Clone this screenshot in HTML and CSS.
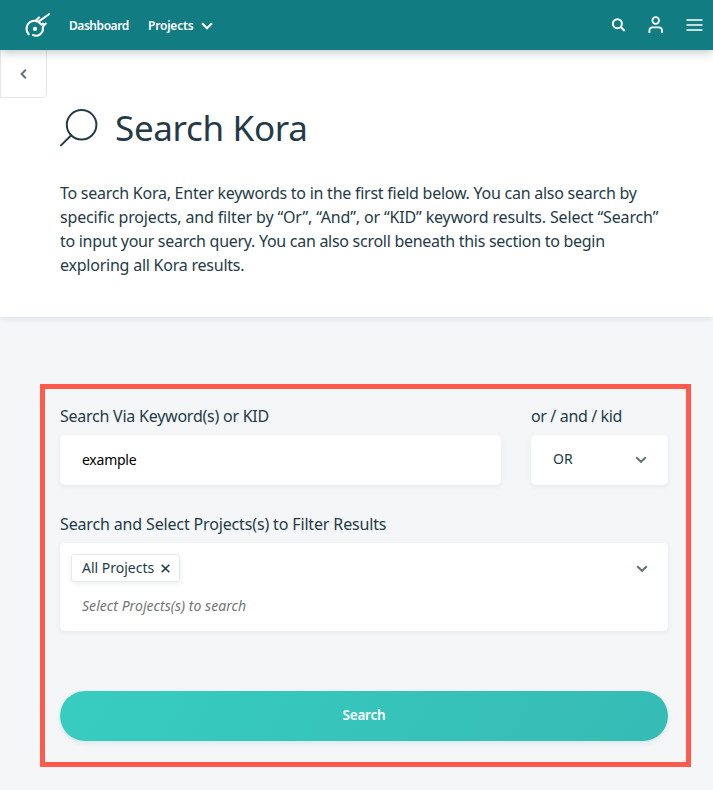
FILE: index.html
```html
<!DOCTYPE html>
<html lang="en">
<head>
<meta charset="utf-8">
<title>Search Kora</title>
<link rel="stylesheet" href="styles.css">
</head>
<body>
<header class="navbar">
  <a class="logo" aria-label="Kora">
    <svg width="26" height="26" viewBox="0 0 26 26" fill="none" stroke="#fff" stroke-width="2.1" stroke-linecap="round" stroke-linejoin="round">
      <path d="M3.6 22.2C-.4 17.5 1.8 9.3 9.2 8.8Q11 8.8 12 7.6L14 5.6"/>
      <path d="M8 23C13 25.2 18.6 21.3 17.8 16Q17.7 14.7 18.6 13.8L20.8 11.6"/>
      <path d="M10.8 9.2L13.6 9.6L24.2 2M13.8 10.2L16.6 12.8L18 11.6" />
      <circle cx="10" cy="16.9" r="2.1" fill="#fff" stroke="none"/>
    </svg>
  </a>
  <nav class="menu">
    <a class="menu-dashboard">Dashboard</a>
    <a class="menu-projects">Projects</a>
    <svg class="menu-chevron" width="12" height="8" viewBox="0 0 12 8" fill="none" stroke="#fff" stroke-width="2.1"><path d="M1 1.2L6 6.2L11 1.2"/></svg>
  </nav>
  <div class="tools">
    <svg width="14" height="14" viewBox="0 0 14 14" fill="none" stroke="#fff" stroke-width="2"><circle cx="5.4" cy="5.7" r="4.5"/><path d="M8.7 9L12.7 13"/></svg>
    <svg width="16" height="18" viewBox="0 0 16 18" fill="none" stroke="#fff" stroke-width="1.8"><circle cx="7.7" cy="4.5" r="3.3"/><path d="M1.4 17V14.5Q1.4 11.4 4.7 11.4H10.7Q14 11.4 14 14.5V17"/></svg>
    <svg width="17" height="12" viewBox="0 0 17 12" stroke="#fff" stroke-width="1.7"><path d="M.5 1H16.5M.5 6H16.5M.5 11H16.5"/></svg>
  </div>
</header>
<main>
  <section class="intro">
    <button class="back" aria-label="Back"><svg width="7" height="10" viewBox="0 0 7 10" fill="none" stroke="#667278" stroke-width="2"><path d="M5.8 .8L1.6 5L5.8 9.2"/></svg></button>
    <h1 class="title">
      <svg width="38" height="38" viewBox="0 0 38 38" fill="none" stroke="#243b47" stroke-width="2"><circle cx="21.6" cy="15.8" r="14.8"/><path d="M11.2 26.3L1 36.4" stroke-linecap="round"/></svg>
      <span>Search Kora</span>
    </h1>
    <p class="description">
      <span class="line-1">To search Kora, Enter keywords to in the first field below. You can also search by</span><br>
      <span class="line-2">specific projects, and filter by “Or”, “And”, or “KID” keyword results. Select “Search”</span><br>
      <span class="line-3">to input your search query. You can also scroll beneath this section to begin</span><br>
      <span class="line-4">exploring all Kora results.</span>
    </p>
  </section>
  <form class="search">
    <div class="top-row">
      <div class="field">
        <label class="label label-keyword">Search Via Keyword(s) or KID</label>
        <div class="control"><span class="value">example</span></div>
      </div>
      <div class="field">
        <label class="label label-operator">or / and / kid</label>
        <div class="control control-select"><span class="operator">OR</span><svg width="12" height="8" viewBox="0 0 12 8" fill="none" stroke="#667278" stroke-width="2"><path d="M1.2 1.2L6 5.8L10.8 1.2"/></svg></div>
      </div>
    </div>
    <div class="field">
      <label class="label label-projects">Search and Select Projects(s) to Filter Results</label>
      <div class="projects">
        <div class="projects-main">
          <span class="chip"><span class="chip-text">All Projects</span><svg width="9" height="9" viewBox="0 0 9 9" fill="none" stroke="#243b47" stroke-width="1.6"><path d="M.7 .7L8.3 8.3M8.3 .7L.7 8.3"/></svg></span>
          <span class="placeholder">Select Projects(s) to search</span>
        </div>
        <svg class="projects-chevron" width="12" height="8" viewBox="0 0 12 8" fill="none" stroke="#667278" stroke-width="2"><path d="M1.2 1.2L6 5.8L10.8 1.2"/></svg>
      </div>
    </div>
    <button class="submit" type="button"><span>Search</span></button>
  </form>
</main>
</body>
</html>
```
FILE: styles.css
```css
* { box-sizing: border-box; }
body {
  margin: 0;
  background: #f4f6f8;
  color: #243b47;
  font-family: "Noto Sans", "Open Sans", sans-serif;
  font-size: 16px;
}
svg { display: block; flex: none; }
button { font: inherit; border: 0; padding: 0; }
.navbar {
  position: relative;
  z-index: 1;
  display: flex;
  align-items: center;
  height: 50px;
  padding: 0 10px 0 25px;
  background: #117c81;
  color: #fff;
  box-shadow: 0 2px 10px rgba(36, 59, 71, .3);
}
.logo { margin-right: 18px; }
.menu { display: flex; align-items: center; font-size: 12px; font-weight: 600; line-height: 20px; white-space: nowrap; }
.menu a { padding-top: 2px; }
.menu-dashboard { width: 79px; letter-spacing: -.45px; }
.menu-projects { width: 53px; letter-spacing: -.2px; }
.menu-chevron { margin-top: 1px; }
.tools { display: flex; align-items: center; margin-left: auto; gap: 22px; }
.intro {
  height: 267px;
  background: #fff;
  box-shadow: 0 1px 6px rgba(36, 59, 71, .12);
}
.back {
  display: flex;
  align-items: center;
  justify-content: center;
  width: 47px;
  height: 48px;
  padding-right: 1px;
  background: #fff;
  border: 1px solid #e4e7e9;
  border-top: 0;
  border-bottom-right-radius: 5px;
}
.title {
  display: flex;
  align-items: center;
  gap: 17px;
  height: 60px;
  margin: 0 0 0 60px;
  font-size: 35px;
  font-weight: 400;
  letter-spacing: -.33px;
  line-height: 60px;
  white-space: nowrap;
}
.description { margin: 23px 0 0 60px; line-height: 24px; white-space: nowrap; }
.line-1 { letter-spacing: -.25px; }
.line-2 { letter-spacing: -.15px; }
.line-3 { letter-spacing: -.28px; }
.line-4 { letter-spacing: -.23px; }
.search {
  display: flex;
  flex-direction: column;
  margin: 67px 22px 0 40px;
  height: 383px;
  border: 5px solid #ff5a4c;
  padding: 17px 18px 0 15px;
}
.top-row { display: grid; grid-template-columns: 441px 137px; gap: 30px; margin-bottom: 29px; }
.label { display: block; height: 29px; line-height: 20px; white-space: nowrap; }
.label-keyword { letter-spacing: -.24px; }
.label-operator { letter-spacing: -.36px; }
.label-projects { letter-spacing: -.15px; }
.control {
  display: flex;
  align-items: center;
  height: 50px;
  padding: 0 22px;
  background: #fff;
  border-radius: 5px;
  box-shadow: 0 2px 5px rgba(36, 59, 71, .06);
}
.control-select { justify-content: space-between; padding-right: 21px; }
.value { color: #000; font-size: 14px; letter-spacing: -.25px; padding-bottom: 1px; }
.operator { font-size: 14px; padding-bottom: 3px; }
.projects {
  display: flex;
  justify-content: space-between;
  height: 88px;
  padding: 11px 20px 0 11px;
  background: #fff;
  border-radius: 5px;
  box-shadow: 0 2px 5px rgba(36, 59, 71, .06);
}
.projects-chevron { margin-top: 11px; }
.chip {
  display: flex;
  align-items: center;
  justify-content: space-between;
  width: 109px;
  height: 28px;
  padding: 0 9px 0 10px;
  border: 1px solid #e6e9eb;
  border-radius: 3px;
  box-shadow: 0 2px 5px rgba(36, 59, 71, .08);
  font-size: 14px;
  white-space: nowrap;
}
.chip-text { padding-bottom: 2px; }
.placeholder { display: block; margin: 14px 0 0 11px; color: #757575; font-size: 14px; font-style: italic; letter-spacing: .05px; line-height: 20px; }
.submit {
  height: 50px;
  margin-top: 60px;
  padding-bottom: 3px;
  border-radius: 25px;
  background: linear-gradient(120deg, #37cdc0, #36bbb5);
  box-shadow: 0 2px 5px rgba(36, 120, 110, .12);
  color: #fff;
  font-size: 13.5px;
  font-weight: 600;
  letter-spacing: -.2px;
}
```
